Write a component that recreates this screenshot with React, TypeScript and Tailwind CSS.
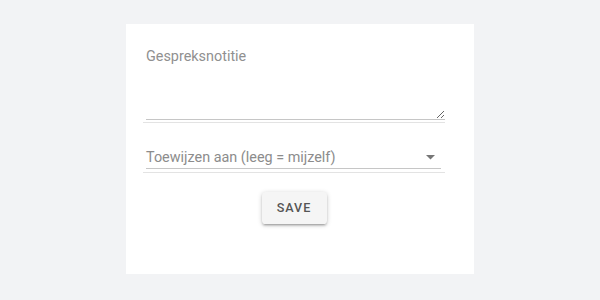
import React from "react";

export default function App() {
  return (
    <div
      className="min-h-[300px] w-full bg-[#f2f3f5] flex justify-center pt-[24px]"
      style={{ fontFamily: "Roboto, 'Liberation Sans', sans-serif" }}
    >
      <div className="w-[348px] h-[250px] bg-white pl-[17px] pr-[29px] pt-[24px]">
        <div className="border-b border-[#e3e3e3] pb-[2px]">
          <textarea
            placeholder="Gespreksnotitie"
            className="block ml-[3px] w-[299px] h-[72px] resize-y border-0 border-b border-[#c6c6c6] bg-transparent p-0 text-[14.4px] leading-[17px] text-[#333] placeholder:text-[#909090] outline-none"
            style={{ fontFamily: "Roboto, 'Liberation Sans', sans-serif" }}
          />
        </div>
        <div className="mt-[26px] border-b border-[#e3e3e3] pb-[3px]">
          <div className="ml-[3px] mr-[4px] flex items-center justify-between border-b border-[#c6c6c6] pb-[2px]">
            <span className="text-[14.4px] leading-[17px] text-[#8c8c8c]">
              Toewijzen aan (leeg = mijzelf)
            </span>
            <svg width="9" height="5" viewBox="0 0 9 5" className="mr-[6px]">
              <path d="M0 0 L9 0 L4.5 4.5 Z" fill="#767676" />
            </svg>
          </div>
        </div>
        <div className="flex justify-center mt-[19px]">
          <button className="w-[65px] h-[32px] rounded-[3.6px] bg-[#f5f5f5] text-[12.6px] font-medium tracking-[1px] text-[#555555] shadow-[0_1px_5px_rgba(0,0,0,0.2),0_2px_2px_rgba(0,0,0,0.14),0_3px_1px_-2px_rgba(0,0,0,0.12)]">
            SAVE
          </button>
        </div>
      </div>
    </div>
  );
}
